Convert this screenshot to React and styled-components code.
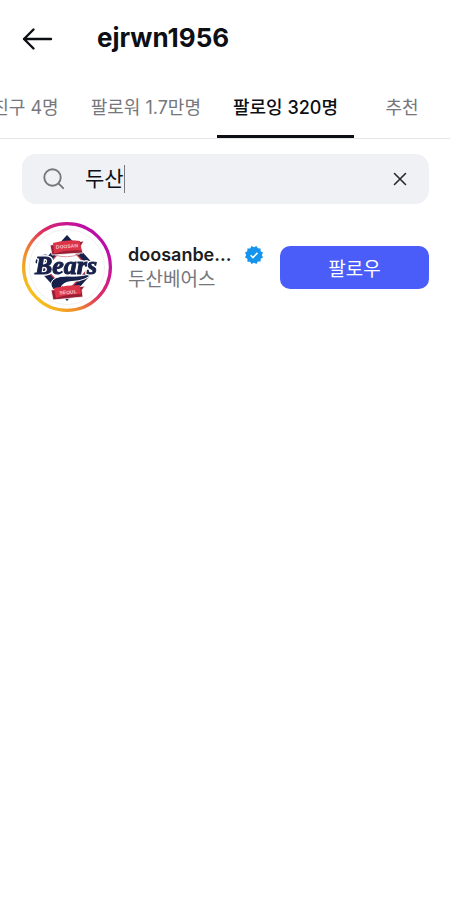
import React, { useState } from 'react';
import styled, { createGlobalStyle } from 'styled-components';

const tabs = [
    { label: '친구 4명' },
    { label: '팔로워 1.7만명' },
    { label: '팔로잉 320명', active: true },
    { label: '추천', wide: true },
];

const BackIcon = () => (
    <svg width="32" height="32" viewBox="0 0 32 32" fill="none" stroke="#0c0f14" strokeWidth="2.4" strokeLinecap="round" strokeLinejoin="round">
        <path d="M11.5 7.5 2 17l9.5 9.5M2 17h27" />
    </svg>
);

const SearchIcon = () => (
    <svg width="22" height="22" viewBox="0 0 22 22" fill="none" stroke="#75777c" strokeWidth="1.9" strokeLinecap="round">
        <circle cx="9.5" cy="9.5" r="8.2" />
        <path d="m15.4 15.4 4.8 4.8" />
    </svg>
);

const ClearIcon = () => (
    <svg width="14" height="14" viewBox="0 0 14 14" fill="none" stroke="#25282e" strokeWidth="1.6" strokeLinecap="round">
        <path d="m1.5 1.5 11 11M12.5 1.5l-11 11" />
    </svg>
);

const VerifiedIcon = () => (
    <svg width="18" height="18" viewBox="0 0 40 40" role="img" aria-label="verified">
        <path
            fill="#1594ee"
            d="M20 2.5 25.4 0l3.2 5.2 6 .2v6.2l5.4 3-2.6 5.4 2.6 5.4-5.2 3.2v6h-6.2L25.4 40 20 37.4 14.6 40l-3.2-5.2h-6v-6.2L0 25.4 2.6 20 0 14.6l5.2-3.2v-6h6.2L14.6 0z"
        />
        <path d="m12.5 20.5 5.2 5.2 10-10.4" fill="none" stroke="#fff" strokeWidth="3.4" />
    </svg>
);

const TeamAvatar = () => (
    <svg width="90" height="90" viewBox="0 0 90 90" role="img" aria-label="두산베어스">
        <defs>
            <linearGradient id="ring" x1="0.1" y1="0.85" x2="0.9" y2="0.15">
                <stop offset="0" stopColor="#f6c51c" />
                <stop offset="0.28" stopColor="#f08a2c" />
                <stop offset="0.55" stopColor="#dd2f63" />
                <stop offset="0.85" stopColor="#c4129b" />
                <stop offset="1" stopColor="#b70dac" />
            </linearGradient>
        </defs>
        <circle cx="45" cy="45" r="43.4" fill="#fff" stroke="url(#ring)" strokeWidth="3.2" />
        <circle cx="45" cy="45" r="37.5" fill="#fff" stroke="#ececee" strokeWidth="0.8" />
        <path d="M45 13 75 46 45 79 15 46z" fill="#17204a" />
        <path d="M45 22 67 46 45 70 23 46z" fill="#fff" stroke="#c83a4c" strokeWidth="1.3" />
        <path d="M33 33q12 4 25-1M33 61q12-6 25-2" fill="none" stroke="#d99aa2" strokeWidth="1" />
        <path d="M28 23 62 19l-3 5 2 7-31 2z" fill="#981f35" stroke="#fff" strokeWidth="0.8" />
        <path d="M31 21q14-4 27-2l1 9.5q-13-1-27 3z" fill="#db3348" />
        <path
            d="M72 50Q65 59 50 59.5 37 60 38 72 28 67 29 61 31 54 45 54 63 55 72 50z"
            fill="#17204a"
            stroke="#fff"
            strokeWidth="1"
        />
        <path d="M29 68 63 64l-3 4 1 7-30 3z" fill="#981f35" stroke="#fff" strokeWidth="0.8" />
        <path d="M32 66q13-3 26-3l1 9q-13 0-25 4z" fill="#db3348" />
        <Ribbon x="45" y="26" transform="rotate(-4 45 25)">DOOSAN</Ribbon>
        <Ribbon x="46" y="72" transform="rotate(-4 46 70)">SEOUL</Ribbon>
        <path d="M15 40q1-6 9-6" fill="none" stroke="#17204a" strokeWidth="3" strokeLinecap="round" />
        <Wordmark x="44" y="52">Bears</Wordmark>
    </svg>
);

const App = () => {
    const [query, setQuery] = useState('두산');

    return (
        <Page>
            <GlobalStyle />
            <Header>
                <IconButton type="button" aria-label="뒤로">
                    <BackIcon />
                </IconButton>
                <Title>ejrwn1956</Title>
            </Header>
            <Tabs>
                {tabs.map(({ label, active, wide }) => (
                    <Tab key={label} type="button" $active={active} $wide={wide} aria-pressed={!!active}>
                        {label}
                    </Tab>
                ))}
            </Tabs>
            <Content>
                <SearchBox>
                    <SearchIcon />
                    <Field>
                        <SearchInput aria-label="검색" value={query} onChange={(e) => setQuery(e.target.value)} />
                        <Caret />
                    </Field>
                    <IconButton type="button" aria-label="지우기" onClick={() => setQuery('')}>
                        <ClearIcon />
                    </IconButton>
                </SearchBox>
                <UserRow>
                    <TeamAvatar />
                    <UserText>
                        <NameLine>
                            <UserName href="#doosanbears">doosanbe...</UserName>
                            <VerifiedIcon />
                        </NameLine>
                        <FullName>두산베어스</FullName>
                    </UserText>
                    <FollowButton type="button">팔로우</FollowButton>
                </UserRow>
            </Content>
        </Page>
    );
};

/* ----------------- Styles ----------------- */
const GlobalStyle = createGlobalStyle`
    * {
        box-sizing: border-box;
    }
    body {
        margin: 0;
        background: #fff;
        color: #0c0f14;
    }
    body, button, input {
        font-family: Inter, "Noto Sans CJK KR", sans-serif;
    }
    svg {
        display: block;
        flex: none;
    }
`;

const Page = styled.div`
    min-height: 100vh;
    overflow: hidden;
`;

const Header = styled.header`
    display: flex;
    align-items: center;
    gap: 43px;
    height: 76px;
    padding: 0 22px;
`;

const IconButton = styled.button`
    padding: 0;
    border: 0;
    background: none;
    cursor: pointer;
`;

const Title = styled.h1`
    margin: 0;
    font-size: 26px;
    line-height: 32px;
    font-weight: 700;
`;

const Tabs = styled.nav`
    display: flex;
    justify-content: flex-end;
    height: 63px;
    border-bottom: 1px solid #e6e7ea;
`;

const Tab = styled.button`
    flex: none;
    min-width: ${(props) => (props.$wide ? '96px' : '0')};
    padding: 0 16px;
    border: 0;
    border-bottom: 3px solid ${(props) => (props.$active ? '#0c0f14' : 'transparent')};
    background: none;
    color: ${(props) => (props.$active ? '#0c0f14' : '#75777c')};
    font-size: 18px;
    font-weight: ${(props) => (props.$active ? 500 : 400)};
    white-space: nowrap;
    cursor: pointer;
`;

const Content = styled.main`
    padding: 15px 21px 0 22px;
`;

const SearchBox = styled.div`
    display: flex;
    align-items: center;
    height: 50px;
    padding: 0 22px 0 21px;
    border-radius: 14px;
    background: #f0f1f5;
`;

const Field = styled.div`
    flex: 1;
    display: flex;
    align-items: center;
    min-width: 0;
    padding-left: 20px;
`;

const SearchInput = styled.input`
    field-sizing: content;
    max-width: 100%;
    padding: 0;
    border: 0;
    outline: 0;
    background: none;
    color: #0c0f14;
    font-size: 21px;
    line-height: 28px;
`;

const Caret = styled.span`
    width: 1px;
    height: 28px;
    background: #75777c;
`;

const UserRow = styled.section`
    display: flex;
    align-items: center;
    padding-top: 18px;
`;

const UserText = styled.div`
    flex: 1;
    min-width: 0;
    padding: 0 17px 0 16px;
`;

const NameLine = styled.div`
    display: flex;
    align-items: center;
    justify-content: space-between;
`;

const UserName = styled.a`
    color: #1b1d21;
    font-size: 18px;
    line-height: 25px;
    font-weight: 600;
    text-decoration: none;
`;

const FullName = styled.div`
    color: #75777c;
    font-size: 19px;
    line-height: 25px;
`;

const FollowButton = styled.button`
    flex: none;
    width: 149px;
    height: 43px;
    border: 0;
    border-radius: 10px;
    background: #4a5df9;
    color: #fff;
    font-size: 19px;
    font-weight: 400;
    cursor: pointer;
`;

const Ribbon = styled.text`
    fill: #f6c3ca;
    font-family: "Liberation Sans", sans-serif;
    font-size: 5px;
    font-weight: 700;
    text-anchor: middle;
`;

const Wordmark = styled.text`
    fill: #17204a;
    stroke: #17204a;
    stroke-width: 1px;
    font-family: "Liberation Serif", serif;
    font-size: 26px;
    font-style: italic;
    font-weight: 700;
    text-anchor: middle;
    filter: drop-shadow(1px 0 0 #fff) drop-shadow(-1px 0 0 #fff) drop-shadow(0 1px 0 #fff) drop-shadow(0 -1px 0 #fff);
`;

export default App;
